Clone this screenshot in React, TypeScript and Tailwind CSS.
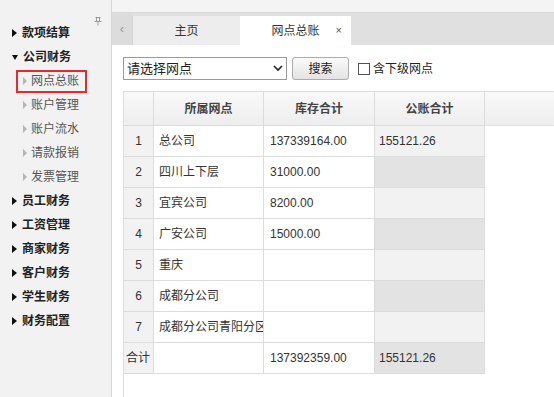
import React from "react";

const font = "font-['Liberation_Sans','Noto_Sans_CJK_SC',sans-serif]";

type Row = { no: string; name: string; stock: string; acct: string };

const rows: Row[] = [
  { no: "1", name: "总公司", stock: "137339164.00", acct: "155121.26" },
  { no: "2", name: "四川上下层", stock: "31000.00", acct: "" },
  { no: "3", name: "宜宾公司", stock: "8200.00", acct: "" },
  { no: "4", name: "广安公司", stock: "15000.00", acct: "" },
  { no: "5", name: "重庆", stock: "", acct: "" },
  { no: "6", name: "成都分公司", stock: "", acct: "" },
  { no: "7", name: "成都分公司青阳分区", stock: "", acct: "" },
  { no: "合计", name: "", stock: "137392359.00", acct: "155121.26" },
];

const subItems = ["网点总账", "账户管理", "账户流水", "请款报销", "发票管理"];
const moreGroups = ["员工财务", "工资管理", "商家财务", "客户财务", "学生财务", "财务配置"];

function Closed() {
  return (
    <span className="w-0 h-0 border-y-[4px] border-y-transparent border-l-[5px] border-l-[#111] mr-[5px]" />
  );
}

function Group({ label, open }: { label: string; open?: boolean }) {
  return (
    <div className="h-[24px] flex items-center pl-[12px] text-[12px] font-bold text-[#222]">
      {open ? (
        <span className="w-0 h-0 border-x-[3px] border-x-transparent border-t-[5px] border-t-[#111] mr-[5px]" />
      ) : (
        <Closed />
      )}
      {label}
    </div>
  );
}

function Sidebar() {
  return (
    <div className="relative w-[112px] shrink-0 border-r border-[#d6d6d6] bg-[#f2f2f2] pt-[21px]">
      {/* pin */}
      <svg className="absolute left-[94px] top-[17px]" width="8" height="9" viewBox="0 0 8 9">
        <path d="M1.5 0.5h5M2.5 0.5v4M5.5 0.5v4M0.5 4.5h7M4 4.5v4" stroke="#999" fill="none" />
      </svg>
      <Group label="款项结算" />
      <Group label="公司财务" open />
      {subItems.map((s, i) => (
        <div key={s} className="h-[24px] flex items-center pl-[23px] text-[12px] text-[#555]">
          <span className="w-0 h-0 border-y-[4px] border-y-transparent border-l-[4px] border-l-[#b5b5b5] mr-[4px]" />
          {s}
          {i === 0 && (
            <span className="absolute left-[16px] w-[71px] h-[23px] border-2 border-[#e8282b]" />
          )}
        </div>
      ))}
      {moreGroups.map((g) => (
        <Group key={g} label={g} />
      ))}
    </div>
  );
}

function Tabs() {
  return (
    <div className="h-[33px] flex bg-[#e0e0e0] border-t border-[#d8d8d8]">
      <div className="w-[20px] flex items-center justify-center text-[#999] text-[13px] bg-[#dcdcdc]">
        ‹
      </div>
      <div className="flex self-end h-[29px]">
        <div className="w-[108px] flex items-center justify-center bg-[#ededed] border-l border-[#d4d4d4] text-[12px] text-[#333]">
          主页
        </div>
        <div className="relative w-[111px] flex items-center justify-center bg-white text-[12px] text-[#333]">
          网点总账
          <span className="absolute right-[9px] text-[11px] text-[#555]">×</span>
        </div>
      </div>
    </div>
  );
}

function Toolbar() {
  return (
    <div className="flex items-center h-[23px]">
      <div className="w-[164px] h-[23px] flex items-center justify-between border border-[#9a9a9a] px-[3px] text-[13px] text-[#222]">
        请选择网点
        <svg width="10" height="7" viewBox="0 0 10 7">
          <path d="M1 1l4 4 4-4" stroke="#222" strokeWidth="1.6" fill="none" />
        </svg>
      </div>
      <div className="ml-[5px] w-[57px] h-[23px] flex items-center justify-center rounded-[3px] border border-[#acacac] bg-gradient-to-b from-[#fbfbfb] to-[#e3e3e3] text-[12px] text-[#222]">
        搜索
      </div>
      <span className="ml-[9px] w-[12px] h-[12px] border border-[#555] bg-white" />
      <span className="ml-[3px] text-[12px] text-[#222]">含下级网点</span>
    </div>
  );
}

function Grid() {
  const cell = "h-[31px] border-b border-r border-[#dcdcdc] flex items-center text-[12px] text-[#333] overflow-hidden whitespace-nowrap";
  const head = "h-[34px] border-b border-r border-[#dcdcdc] flex items-center justify-center text-[12px] font-bold text-[#444]";
  return (
    <div className="mt-[11px] flex-1 border-l border-t border-[#dcdcdc]">
      <div className="grid grid-cols-[30px_110px_111px_110px_1fr] bg-gradient-to-b from-[#f9f9f9] to-[#ededed]">
        <div className={head} />
        <div className={head}>所属网点</div>
        <div className={head}>库存合计</div>
        <div className={head}>公账合计</div>
        <div className="h-[34px] border-b border-[#e4e4e4]" />
      </div>
      {rows.map((r, i) => (
        <div key={r.no} className="grid grid-cols-[30px_110px_111px_110px_1fr]">
          <div className={`${cell} bg-[#f2f2f2] ${r.no === "合计" ? "justify-start pl-[2px]" : "justify-center"}`}>
            {r.no}
          </div>
          <div className={`${cell} pl-[5px]`}>{r.name}</div>
          <div className={`${cell} pl-[6px]`}>{r.stock}</div>
          <div className={`${cell} pl-[4px] ${i % 2 === 0 ? "bg-[#f2f2f2]" : "bg-[#e3e3e3]"}`}>{r.acct}</div>
          <div />
        </div>
      ))}
    </div>
  );
}

export default function App() {
  return (
    <div className={`${font} w-[554px] h-[397px] flex bg-[#f4f4f4] overflow-hidden`}>
      <Sidebar />
      <div className="flex-1 flex flex-col pt-[12px]">
        <Tabs />
        <div className="flex-1 flex flex-col bg-white pl-[11px] pt-[12px]">
          <Toolbar />
          <Grid />
        </div>
      </div>
    </div>
  );
}
